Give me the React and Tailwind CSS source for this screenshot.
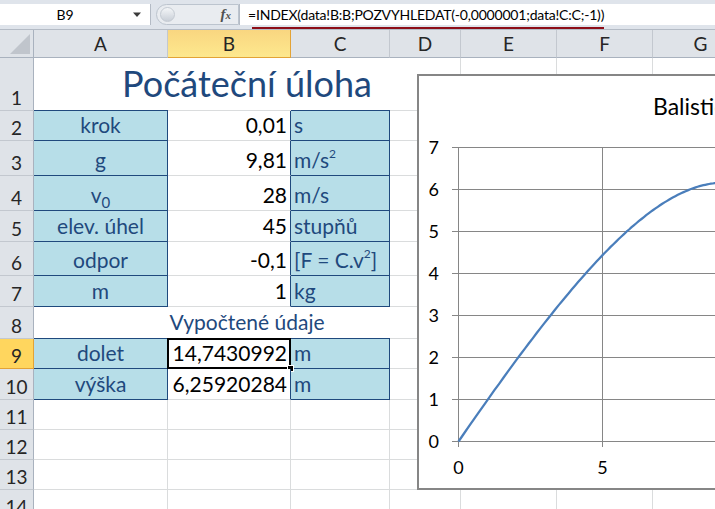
import React from 'react';

// column widths A..G
const colW = ['w-[134px]', 'w-[123px]', 'w-[99px]', 'w-[71px]', 'w-[96px]', 'w-[96px]', 'w-[96px]'];
const colNames = ['A', 'B', 'C', 'D', 'E', 'F', 'G'];

// row heights (including bottom gridline)
const rowH = {
    1: 'h-[53px]', 2: 'h-[30px]', 3: 'h-[35px]', 4: 'h-[35px]', 5: 'h-[31px]', 6: 'h-[34px]', 7: 'h-[31px]',
    8: 'h-[32px]', 9: 'h-[30px]', 10: 'h-[31px]', 11: 'h-[30px]', 12: 'h-[30px]', 13: 'h-[30px]', 14: 'h-[30px]',
};

const inputs = [
    { r: 2, a: 'krok', b: '0,01', c: 's' },
    { r: 3, a: 'g', b: '9,81', c: <>m/s<sup className="text-[12px] -top-[10px]">2</sup></> },
    { r: 4, a: <>v<sub className="text-[15px] -bottom-[5px]">0</sub></>, b: '28', c: 'm/s' },
    { r: 5, a: 'elev. úhel', b: '45', c: 'stupňů' },
    { r: 6, a: 'odpor', b: '-0,1', c: <>[F = C.v<sup className="text-[12px] -top-[10px]">2</sup>]</> },
    { r: 7, a: 'm', b: '1', c: 'kg' },
];

// simple Euler integration of the throw, same as the sheet
const trajectory = () => {
    const g = 9.81, k = 0.1, m = 1, dt = 0.01;
    const ang = (45 * Math.PI) / 180;
    let x = 0, y = 0, vx = 28 * Math.cos(ang), vy = 28 * Math.sin(ang);
    const pts = [[0, 0]];
    for (let i = 0; i < 5000; i++) {
        const v = Math.hypot(vx, vy);
        vx += (-k * v * vx / m) * dt;
        vy += (-g - k * v * vy / m) * dt;
        x += vx * dt;
        y += vy * dt;
        if (y < 0) break;
        pts.push([x, y]);
    }
    return pts;
};

const RowHeader = ({ n, active }) => (
    <div
        className={`${rowH[n]} w-[34px] shrink-0 flex items-end justify-center pb-[3px] text-[19px] leading-none border-r border-b ${active
            ? 'bg-[#ffd65e] border-[#e3a336] text-[#262626]'
            : 'bg-[#dfe3e8] border-r-[#a9b2be] border-b-[#c3c8cf] text-[#262626]'
            }`}
    >
        {n}
    </div>
);

const Empty = ({ w }) => <div className={`${w} shrink-0 border-r border-b border-[#dadcdd]`} />;

const Tail = () => (
    <>
        <Empty w="w-[96px]" />
        <Empty w="w-[96px]" />
        <Empty w="w-[96px]" />
    </>
);

// merged A:D cell with per-column bottom border
const Merged = ({ children, className, bottom }) => (
    <div className="w-[427px] shrink-0 flex flex-col border-r border-[#dadcdd]">
        <div className={`flex-1 flex items-end justify-center ${className}`}>{children}</div>
        <div className="flex h-px">
            <div className={`w-[134px] ${bottom[0]}`} />
            <div className={`w-[123px] ${bottom[1]}`} />
            <div className={`w-[99px] ${bottom[2]}`} />
            <div className={`w-[70px] ${bottom[3]}`} />
        </div>
    </div>
);

const DataRow = ({ r, a, b, c, selected }) => (
    <div className="flex">
        <RowHeader n={r} active={selected} />
        <div className={`${rowH[r]} w-[134px] shrink-0 bg-[#b7dee8] border-r border-b border-[#1f497d] flex items-end justify-center pb-[5px] text-[#1f497d]`}>
            <span>{a}</span>
        </div>
        <div className={`${rowH[r]} relative w-[123px] shrink-0 bg-white border-r border-b border-r-[#1f497d] border-b-[#dadcdd] flex items-end justify-end pr-[3px] pb-[5px] text-black`}>
            <span>{b}</span>
            {selected && (
                <>
                    <div className="absolute -left-[1px] -top-[1px] -right-[1px] -bottom-[1px] border-2 border-black" />
                    <div className="absolute -right-[4px] -bottom-[4px] w-[7px] h-[7px] bg-black border border-white" />
                </>
            )}
        </div>
        <div className={`${rowH[r]} w-[99px] shrink-0 bg-[#b7dee8] border-r border-b border-[#1f497d] flex items-end justify-start pl-[3px] pb-[5px] text-[#1f497d]`}>
            <span>{c}</span>
        </div>
        <Empty w="w-[71px]" />
        <Tail />
    </div>
);

const Chart = () => {
    const pts = trajectory()
        .map(([x, y]) => `${(39.5 + x * 28.8).toFixed(1)},${(365.5 - y * 42).toFixed(1)}`)
        .join(' ');
    const ys = [0, 1, 2, 3, 4, 5, 6, 7];
    return (
        <div className="absolute left-[417px] top-[74px] w-[600px] h-[416px] bg-white border-2 border-[#868686]">
            <svg width="596" height="412" className="block" fontFamily="Lato, sans-serif">
                <text x="234" y="39" fontSize="23" fill="#000">Balistická křivka</text>
                {ys.map((v) => (
                    <g key={v}>
                        <line x1="33" x2="596" y1={365.5 - v * 42} y2={365.5 - v * 42} stroke="#868686" strokeWidth="1" />
                        <text x="20" y={365.5 - v * 42 + 6.5} fontSize="18" textAnchor="end" fill="#000">{v}</text>
                    </g>
                ))}
                <line x1="39.5" x2="39.5" y1="71.5" y2="371" stroke="#868686" strokeWidth="1" />
                <line x1="183.5" x2="183.5" y1="71.5" y2="371" stroke="#868686" strokeWidth="1" />
                <line x1="327.5" x2="327.5" y1="71.5" y2="371" stroke="#868686" strokeWidth="1" />
                <text x="39.5" y="398" fontSize="18" textAnchor="middle" fill="#000">0</text>
                <text x="183.5" y="398" fontSize="18" textAnchor="middle" fill="#000">5</text>
                <polyline points={pts} fill="none" stroke="#4a7ebb" strokeWidth="2.25" strokeLinejoin="round" />
            </svg>
        </div>
    );
};

const App = () => {
    return (
        <div className="relative w-[715px] h-[509px] overflow-hidden bg-white font-['Lato',sans-serif] text-[21px] leading-none select-none">
            {/* Formula bar */}
            <div className="flex h-[30px] bg-[#dfe4eb] border-b border-[#b4bbc5]">
                <div className="mt-[4px] h-[21px] w-[151px] shrink-0 bg-white flex items-center border-r border-[#b4bbc5]">
                    <span className="w-[130px] text-center text-[14px] text-black">B9</span>
                    <svg width="10" height="6" viewBox="0 0 10 6" className="ml-[2px]">
                        <path d="M1 0.5 L9 0.5 L5 5 Z" fill="#3b3b3b" />
                    </svg>
                </div>
                <div className="mt-[4px] h-[21px] w-[88px] shrink-0 flex items-center">
                    <div className="ml-[5px] h-[21px] w-[83px] rounded-l-full border border-[#bcc4ce] bg-[#e9ecf0] flex items-center">
                        <div className="ml-[3px] w-[15px] h-[15px] rounded-full bg-linear-to-b from-[#f4f6f8] to-[#c9cfd7] border border-[#c4cad2]" />
                        <span className="ml-auto mr-[7px] text-[15px] italic font-['Liberation_Serif',serif] font-bold text-[#505050]">
                            f<span className="text-[11px]">x</span>
                        </span>
                    </div>
                </div>
                <div className="mt-[4px] h-[21px] flex-1 bg-white border-l border-[#b4bbc5] flex items-start pl-[8px]">
                    <div className="inline-flex flex-col">
                        <span className="text-[14px] leading-[21px] tracking-[-0.2px] text-black whitespace-nowrap">
                            =INDEX(data!B:B;POZVYHLEDAT(-0,0000001;data!C:C;-1))
                        </span>
                        <div className="h-[2px] ml-[4px] mt-[2px] bg-[#8d0d17]" />
                    </div>
                </div>
            </div>

            {/* Column headers */}
            <div className="flex h-[28px]">
                <div className="w-[34px] shrink-0 bg-[#dfe3e8] border-r border-b border-[#a9b2be] flex items-end justify-end p-[3px]">
                    <svg width="20" height="20" viewBox="0 0 20 20">
                        <path d="M20 0 L20 20 L0 20 Z" fill="#c0c5cc" />
                    </svg>
                </div>
                {colNames.map((c, i) =>
                    c === 'B' ? (
                        <div key={c} className={`${colW[i]} shrink-0 flex items-center justify-center text-[19px] text-[#262626] bg-linear-to-b from-[#f9d680] to-[#fde88e] border-r border-b border-[#e3a336]`}>
                            {c}
                        </div>
                    ) : (
                        <div key={c} className={`${colW[i]} shrink-0 flex items-center justify-center text-[19px] text-[#262626] bg-[#dfe3e8] border-r border-b border-r-[#c3c8cf] border-b-[#a9b2be]`}>
                            {c}
                        </div>
                    )
                )}
            </div>

            {/* Row 1 */}
            <div className="flex h-[53px]">
                <RowHeader n={1} />
                <Merged className="pb-[9px] text-[36px] text-[#1f497d]" bottom={['bg-[#1f497d]', 'bg-[#dadcdd]', 'bg-[#1f497d]', 'bg-[#dadcdd]']}>
                    Počáteční úloha
                </Merged>
                <Tail />
            </div>

            {inputs.map((row) => (
                <DataRow key={row.r} {...row} />
            ))}

            {/* Row 8 */}
            <div className="flex h-[32px]">
                <RowHeader n={8} />
                <Merged className="pb-[6px] text-[#1f497d]" bottom={['bg-[#1f497d]', 'bg-[#dadcdd]', 'bg-[#1f497d]', 'bg-[#dadcdd]']}>
                    Vypočtené údaje
                </Merged>
                <Tail />
            </div>

            <DataRow r={9} a="dolet" b="14,7430992" c="m" selected />
            <DataRow r={10} a="výška" b="6,25920284" c="m" />

            {[11, 12, 13, 14].map((r) => (
                <div key={r} className={`flex ${rowH[r]}`}>
                    <RowHeader n={r} />
                    {colW.map((w, i) => (
                        <Empty key={i} w={w} />
                    ))}
                </div>
            ))}

            <Chart />
        </div>
    );
};

export default App;
